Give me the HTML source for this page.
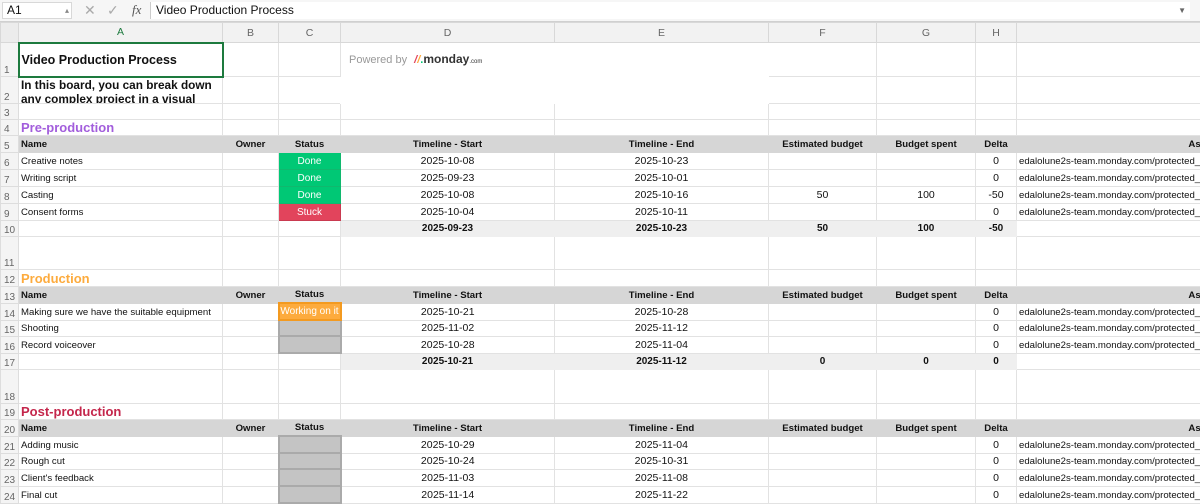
<!DOCTYPE html>
<html><head><meta charset="utf-8"><style>
*{margin:0;padding:0;box-sizing:border-box}
body{width:1200px;height:498px;overflow:hidden;background:#fff;font-family:"Liberation Sans",Arial,sans-serif;font-size:11px;color:#111;position:relative}
.top{position:absolute;left:0;top:0;width:1200px;height:22px;background:#f6f6f6;border-bottom:1px solid #d0d0d0}
.nb{position:absolute;left:2px;top:2px;width:70px;height:17px;background:#fff;border:1px solid #d8d8d8;font-size:12px;padding-left:4px;line-height:15px}
.fb{position:absolute;left:150px;top:2px;width:1040px;height:17px;background:#fff;border-left:1px solid #ccc;font-size:12px;padding-left:5px;line-height:17px}
table{position:absolute;left:0;top:22px;border-collapse:collapse;table-layout:fixed;width:1206px}
td{border:1px solid #e2e2e2;overflow:hidden;white-space:nowrap;padding:0 3px;text-align:center;vertical-align:middle;font-size:10.5px;line-height:11px;padding-top:1px}
td.rh{background:#f4f4f4;color:#666;font-size:10px;text-align:left;vertical-align:bottom;padding:0 0 0 3px;border-color:#ddd}
tr.ch td{background:#f2f2f2;color:#666;font-size:10.5px;border-color:#d8d8d8}
td.l{text-align:left;font-size:9.6px;padding-left:2px}
tr.hd td{background:#d6d6d6;font-weight:bold;border-color:#d6d6d6;font-size:9.6px}
tr.hd td.rh{background:#f4f4f4;font-weight:normal;border-color:#ddd;font-size:10px}
td.s{background:#efefef;font-weight:bold;border-color:#efefef;font-size:10px}
.done{background:#00c875;color:#fff;border-color:#10b86e;font-size:10px !important}
.stuck{background:#e2445c;color:#fff;border-color:#c93a50;font-size:10px !important}
.work{background:#fdab3d;color:#fff;border:2px solid #f39a20;font-size:10px !important}
.emp{background:#c4c4c4;border:2px solid #aaa}
td.sec{font-size:13px;font-weight:bold;text-align:left;line-height:13px;padding-left:2px}
</style></head><body>
<div class="top"><div class="nb">A1<span style="position:absolute;right:2px;top:0;font-size:8px;color:#888">▴</span></div>
<span style="position:absolute;left:84px;top:2px;color:#aaa;font-size:14px">✕</span>
<span style="position:absolute;left:107px;top:2px;color:#aaa;font-size:14px">✓</span>
<span style="position:absolute;left:132px;top:2px;color:#555;font-size:13px;font-style:italic;font-family:'Liberation Serif',serif">fx</span>
<div class="fb">Video Production Process<span style="position:absolute;right:4px;top:0;font-size:8px;color:#666">▼</span></div></div>
<table>
<colgroup><col style="width:18px"><col style="width:204px"><col style="width:56px"><col style="width:62px"><col style="width:214px"><col style="width:214px"><col style="width:108px"><col style="width:99px"><col style="width:41px"><col style="width:190px"></colgroup>
<tr class="ch" style="height:20px"><td style="background:#ececec"></td><td style="color:#1d7a3e">A</td><td>B</td><td>C</td><td>D</td><td>E</td><td>F</td><td>G</td><td>H</td><td></td></tr>
<tr style="height:34px"><td class="rh">1</td><td style="border:2px solid #1d7a3e;font-size:12.5px;font-weight:bold;text-align:left;padding-left:2px">Video Production Process</td><td></td><td></td><td colspan="2" rowspan="2" style="border-color:#fff;text-align:left;vertical-align:top;padding:11px 0 0 8px;color:#999;font-size:11px">Powered by <span style="color:#e2445c;font-weight:bold;font-style:italic;margin-left:4px">/</span><span style="color:#fdab3d;font-weight:bold;font-style:italic">/</span><span style="color:#00c875;font-weight:bold">.</span><b style="color:#333;font-size:12px">monday</b><span style="font-size:6px;color:#333">.com</span></td><td></td><td></td><td></td><td></td></tr>
<tr style="height:26px"><td class="rh">2</td><td style="vertical-align:top;padding:0 0 0 2px;text-align:left"><div style="height:25px;overflow:hidden;font-size:11.8px;font-weight:bold;line-height:14px;white-space:normal">In this board, you can break down any complex project in a visual</div></td><td></td><td></td><td></td><td></td><td></td><td></td></tr>
<tr style="height:16px"><td class="rh">3</td><td></td><td></td><td></td><td></td><td></td><td></td><td></td><td></td><td></td></tr>
<tr style="height:16px"><td class="rh">4</td><td class="sec" style="color:#a25ddc">Pre-production</td><td></td><td></td><td></td><td></td><td></td><td></td><td></td><td></td></tr>
<tr class="hd" style="height:17px"><td class="rh">5</td><td class="l">Name</td><td>Owner</td><td>Status</td><td>Timeline - Start</td><td>Timeline - End</td><td>Estimated budget</td><td>Budget spent</td><td>Delta</td><td style="text-align:right;padding-right:0">Ass</td></tr>
<tr style="height:17px"><td class="rh">6</td><td class="l">Creative notes</td><td></td><td class="done">Done</td><td>2025-10-08</td><td>2025-10-23</td><td></td><td></td><td>0</td><td class="l">edalolune2s-team.monday.com/protected_sta</td></tr>
<tr style="height:17px"><td class="rh">7</td><td class="l">Writing script</td><td></td><td class="done">Done</td><td>2025-09-23</td><td>2025-10-01</td><td></td><td></td><td>0</td><td class="l">edalolune2s-team.monday.com/protected_sta</td></tr>
<tr style="height:17px"><td class="rh">8</td><td class="l">Casting</td><td></td><td class="done">Done</td><td>2025-10-08</td><td>2025-10-16</td><td>50</td><td>100</td><td>-50</td><td class="l">edalolune2s-team.monday.com/protected_sta</td></tr>
<tr style="height:17px"><td class="rh">9</td><td class="l">Consent forms</td><td></td><td class="stuck">Stuck</td><td>2025-10-04</td><td>2025-10-11</td><td></td><td></td><td>0</td><td class="l">edalolune2s-team.monday.com/protected_sta</td></tr>
<tr style="height:16px"><td class="rh">10</td><td></td><td></td><td></td><td class="s">2025-09-23</td><td class="s">2025-10-23</td><td class="s">50</td><td class="s">100</td><td class="s">-50</td><td></td></tr>
<tr style="height:33px"><td class="rh">11</td><td></td><td></td><td></td><td></td><td></td><td></td><td></td><td></td><td></td></tr>
<tr style="height:17px"><td class="rh">12</td><td class="sec" style="color:#fdab3d">Production</td><td></td><td></td><td></td><td></td><td></td><td></td><td></td><td></td></tr>
<tr class="hd" style="height:17px"><td class="rh">13</td><td class="l">Name</td><td>Owner</td><td>Status</td><td>Timeline - Start</td><td>Timeline - End</td><td>Estimated budget</td><td>Budget spent</td><td>Delta</td><td style="text-align:right;padding-right:0">Ass</td></tr>
<tr style="height:17px"><td class="rh">14</td><td class="l">Making sure we have the suitable equipment</td><td></td><td class="work" style="padding:0">Working on it</td><td>2025-10-21</td><td>2025-10-28</td><td></td><td></td><td>0</td><td class="l">edalolune2s-team.monday.com/protected_sta</td></tr>
<tr style="height:16px"><td class="rh">15</td><td class="l">Shooting</td><td></td><td class="emp"></td><td>2025-11-02</td><td>2025-11-12</td><td></td><td></td><td>0</td><td class="l">edalolune2s-team.monday.com/protected_sta</td></tr>
<tr style="height:17px"><td class="rh">16</td><td class="l">Record voiceover</td><td></td><td class="emp"></td><td>2025-10-28</td><td>2025-11-04</td><td></td><td></td><td>0</td><td class="l">edalolune2s-team.monday.com/protected_sta</td></tr>
<tr style="height:16px"><td class="rh">17</td><td></td><td></td><td></td><td class="s">2025-10-21</td><td class="s">2025-11-12</td><td class="s">0</td><td class="s">0</td><td class="s">0</td><td></td></tr>
<tr style="height:34px"><td class="rh">18</td><td></td><td></td><td></td><td></td><td></td><td></td><td></td><td></td><td></td></tr>
<tr style="height:16px"><td class="rh">19</td><td class="sec" style="color:#c4264b">Post-production</td><td></td><td></td><td></td><td></td><td></td><td></td><td></td><td></td></tr>
<tr class="hd" style="height:17px"><td class="rh">20</td><td class="l">Name</td><td>Owner</td><td>Status</td><td>Timeline - Start</td><td>Timeline - End</td><td>Estimated budget</td><td>Budget spent</td><td>Delta</td><td style="text-align:right;padding-right:0">Ass</td></tr>
<tr style="height:17px"><td class="rh">21</td><td class="l">Adding music</td><td></td><td class="emp"></td><td>2025-10-29</td><td>2025-11-04</td><td></td><td></td><td>0</td><td class="l">edalolune2s-team.monday.com/protected_sta</td></tr>
<tr style="height:16px"><td class="rh">22</td><td class="l">Rough cut</td><td></td><td class="emp"></td><td>2025-10-24</td><td>2025-10-31</td><td></td><td></td><td>0</td><td class="l">edalolune2s-team.monday.com/protected_sta</td></tr>
<tr style="height:17px"><td class="rh">23</td><td class="l">Client's feedback</td><td></td><td class="emp"></td><td>2025-11-03</td><td>2025-11-08</td><td></td><td></td><td>0</td><td class="l">edalolune2s-team.monday.com/protected_sta</td></tr>
<tr style="height:17px"><td class="rh">24</td><td class="l">Final cut</td><td></td><td class="emp"></td><td>2025-11-14</td><td>2025-11-22</td><td></td><td></td><td>0</td><td class="l">edalolune2s-team.monday.com/protected_sta</td></tr>
</table>
</body></html>
